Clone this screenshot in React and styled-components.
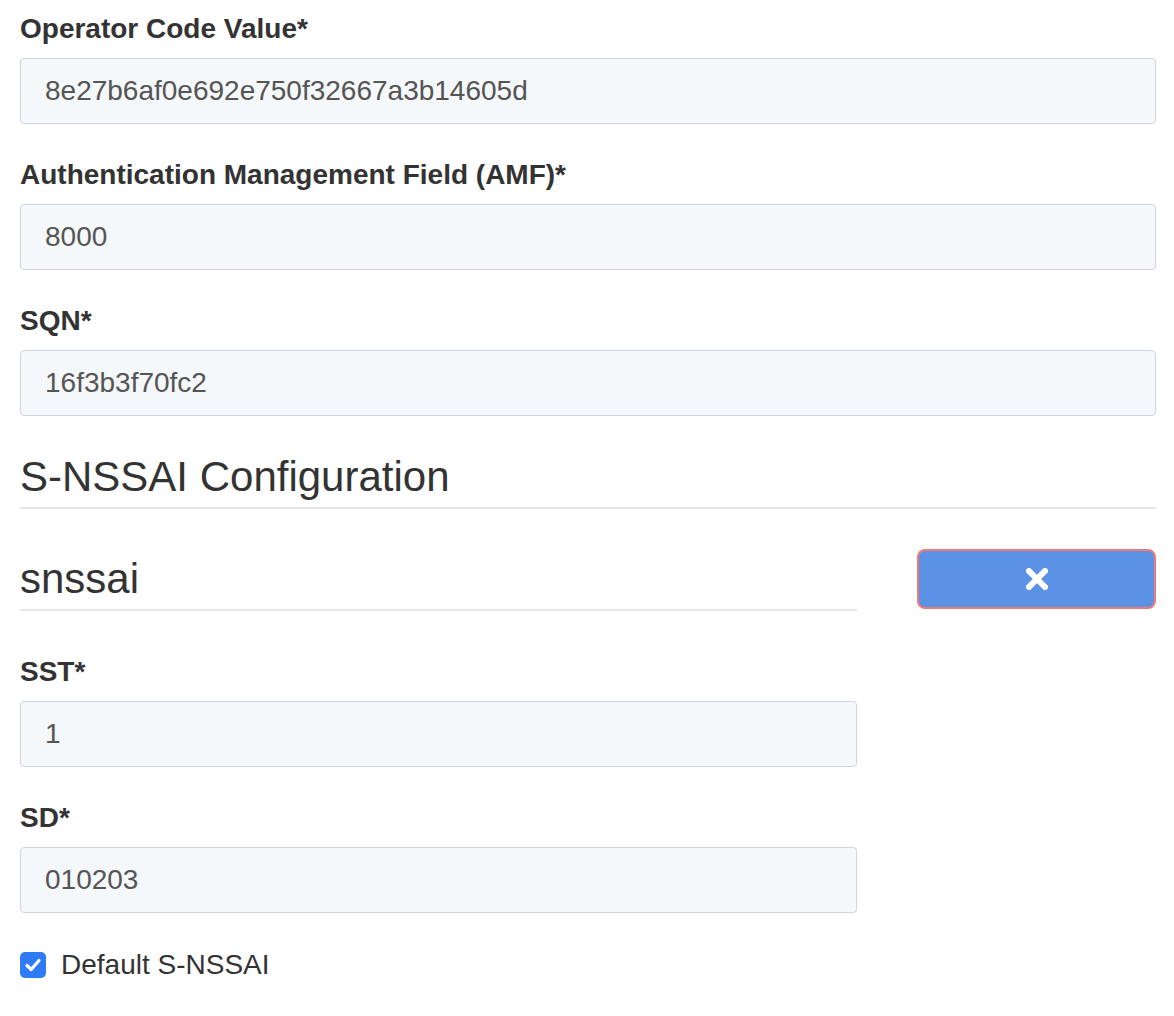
import React, { useState } from "react";
import styled, { createGlobalStyle } from "styled-components";

const GlobalStyle = createGlobalStyle`
  body {
    margin: 0;
    background: #ffffff;
    font-family: "Liberation Sans", Arial, Helvetica, sans-serif;
    color: #333333;
  }
`;

const Form = styled.form`
  width: 1136px;
  padding: 6px 18px 40px 20px;
`;

const FormGroup = styled.div`
  margin-bottom: ${(p) => p.$mb ?? 28}px;
`;

const Label = styled.label`
  display: block;
  font-size: 28px;
  font-weight: bold;
  line-height: 40px;
  padding-top: 3px;
  margin-bottom: 9px;
  color: #333333;
`;

const Input = styled.input`
  display: block;
  box-sizing: border-box;
  width: 100%;
  height: 66px;
  padding: 0 24px;
  font-family: inherit;
  font-size: 28px;
  color: #555555;
  background: #f5f8fb;
  border: 1px solid #cfd3e2;
  border-radius: 4px;
  outline: none;
`;

const Legend = styled.div`
  font-size: 42px;
  line-height: 60px;
  color: #333333;
  border-bottom: 2px solid #e5e5e5;
  margin-bottom: ${(p) => p.$mb ?? 40}px;
`;

const Row = styled.div`
  display: grid;
  grid-template-columns: 837px 239px;
  column-gap: 60px;
  align-items: start;
`;

const Column = styled.div`
  min-width: 0;
`;

const RemoveButton = styled.button`
  box-sizing: border-box;
  width: 100%;
  height: 60px;
  display: flex;
  align-items: center;
  justify-content: center;
  background: #5b92e5;
  border: 2px solid #f07a7a;
  border-radius: 8px;
  cursor: pointer;
`;

const CheckRow = styled.label`
  display: flex;
  align-items: center;
  gap: 15px;
  font-size: 28px;
  line-height: 40px;
  color: #333333;
  cursor: pointer;
`;

const CheckBox = styled.span`
  flex: none;
  width: 26px;
  height: 26px;
  border-radius: 5px;
  background: ${(p) => (p.$checked ? "#2f7bf5" : "#ffffff")};
  border: ${(p) => (p.$checked ? "none" : "1px solid #999")};
  display: flex;
  align-items: center;
  justify-content: center;
`;

const CrossIcon = () => (
  <svg width="22" height="22" viewBox="0 0 22 22">
    <path d="M3 3 L19 19 M19 3 L3 19" stroke="#ffffff" strokeWidth="6" strokeLinecap="square" />
  </svg>
);

const CheckIcon = () => (
  <svg width="18" height="18" viewBox="0 0 18 18">
    <path d="M3 9.5 L7.2 13.5 L15 4.5" stroke="#ffffff" strokeWidth="3.2" fill="none" strokeLinecap="round" strokeLinejoin="round" />
  </svg>
);

const Field = ({ label, value, mb }) => (
  <FormGroup $mb={mb}>
    <Label>{label}</Label>
    <Input defaultValue={value} readOnly />
  </FormGroup>
);

export default function App() {
  const [isDefault, setIsDefault] = useState(true);

  return (
    <>
      <GlobalStyle />
      <Form onSubmit={(e) => e.preventDefault()}>
        <Field label="Operator Code Value*" value="8e27b6af0e692e750f32667a3b14605d" />
        <Field label="Authentication Management Field (AMF)*" value="8000" />
        <Field label="SQN*" value="16f3b3f70fc2" mb={31} />

        <Legend>S-NSSAI Configuration</Legend>

        <Row>
          <Column>
            <Legend $mb={38}>snssai</Legend>
            <Field label="SST*" value="1" />
            <Field label="SD*" value="010203" mb={32} />
            <CheckRow onClick={() => setIsDefault(!isDefault)}>
              <CheckBox $checked={isDefault}>{isDefault && <CheckIcon />}</CheckBox>
              Default S-NSSAI
            </CheckRow>
          </Column>
          <Column>
            <RemoveButton type="button">
              <CrossIcon />
            </RemoveButton>
          </Column>
        </Row>
      </Form>
    </>
  );
}
